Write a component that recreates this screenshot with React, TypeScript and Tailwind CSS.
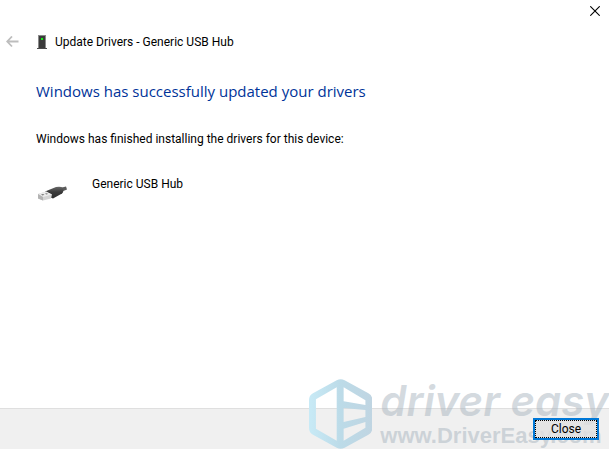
import React from 'react';

interface DriverUpdateDialogProps {
  deviceName: string;
}

const BackIcon = () => (
  <svg width="13" height="12" viewBox="0 0 13 12" fill="none" stroke="#bdbdbd" strokeWidth="1.8">
    <path d="M6 0.5 L1.2 5.5 L6 10.5 M1.2 5.5 H12.5" />
  </svg>
);

const TowerIcon = () => (
  <svg width="10" height="16" viewBox="0 0 10 16">
    <path d="M1 1 H9 V14 H1 Z" fill="#8b8b8b" />
    <path d="M2 2 H8 V14 H2 Z" fill="#3b3b3b" />
    <path d="M0 14 H10 V15 H0 Z" fill="#4a4a4a" />
    <path d="M4 4 H6 V6 H4 Z" fill="#18f018" />
  </svg>
);

const UsbPlugIcon = () => (
  <svg width="32" height="20" viewBox="0 0 32 20">
    <defs>
      <linearGradient id="plug-body" x1="0" y1="0" x2="0" y2="1">
        <stop offset="0" stopColor="#6a6a6a" />
        <stop offset="0.45" stopColor="#3a3a3a" />
        <stop offset="1" stopColor="#2c2c2c" />
      </linearGradient>
    </defs>
    <path d="M24 4 L30 2.5 L31 5.5 L25 8 Z" fill="#5c5c5c" />
    <path d="M9 7.5 L20 3 Q25 2 27 4 Q28 7.5 26 9.5 L17 14.5 L13.5 13 Z" fill="url(#plug-body)" />
    <path d="M2 10 L10 7.5 L16 10.5 L15 14.5 L7 16.5 L2 14.5 Z" fill="#d4d4d4" />
    <path d="M2 10 L10 7.5 L16 10.5 L7 13 Z" fill="#ececec" />
    <path d="M2 10 L7 13 V16.5 L2 14.5 Z" fill="#b3b3b3" />
    <path d="M5 10.5 L7 10 L8.5 10.8 L6.5 11.4 Z M9 9.6 L11 9.2 L12 10 L10.2 10.6 Z" fill="#777777" />
  </svg>
);

const CloseIcon = () => (
  <svg width="10" height="10" viewBox="0 0 10 10" stroke="#000000" strokeWidth="1.1">
    <path d="M0.3 0.3 L9.7 9.7 M9.7 0.3 L0.3 9.7" />
  </svg>
);

const HexLogo = () => (
  <svg width="64" height="70" viewBox="0 0 64 70">
    <defs>
      <linearGradient id="hex-fill" x1="0" y1="0" x2="1" y2="0">
        <stop offset="0" stopColor="#c8eaf6" />
        <stop offset="0.5" stopColor="#bcdbe8" />
        <stop offset="1" stopColor="#c0d5e2" />
      </linearGradient>
    </defs>
    <path
      fill="url(#hex-fill)"
      fillRule="evenodd"
      d="M28 1 Q32 -1 36 1 L60 14 Q64 16 64 21 V49 Q64 54 60 56 L36 69 Q32 71 28 69 L4 56 Q0 54 0 49 V21 Q0 16 4 14 Z M28 8 L7 20 V50 L28 62 Z M35 8 V22 L57 26 V21 Z M35 29 V43 L57 38 V31 Z M35 50 V62 L57 49 V43 Z"
    />
  </svg>
);

const Watermark = () => (
  <div
    aria-hidden="true"
    className="pointer-events-none absolute right-0 bottom-0 flex w-[300px] gap-2 whitespace-nowrap text-[#a9b5bf]/50"
  >
    <HexLogo />
    <div className="flex flex-col">
      <span className="font-['Inter',sans-serif] text-[42px] leading-[44px] font-semibold italic">driver easy</span>
      <span className="font-['Liberation_Sans',sans-serif] text-[22px] leading-[26px] font-bold">
        www.DriverEasy.com
      </span>
    </div>
  </div>
);

const DriverUpdateDialog: React.FC<DriverUpdateDialogProps> = ({ deviceName }) => {
  return (
    <div className="relative flex min-h-screen flex-col overflow-hidden bg-white font-['Roboto',sans-serif] text-[12px] leading-4 text-black">
      <div className="flex justify-end px-[9px] pt-[6px]">
        <button type="button" aria-label="Close window" className="flex h-[10px] w-[10px]">
          <CloseIcon />
        </button>
      </div>

      <header className="flex items-center px-[6px] pt-[18px]">
        <button type="button" aria-label="Back" disabled>
          <BackIcon />
        </button>
        <span className="ml-[18px]">
          <TowerIcon />
        </span>
        <span className="ml-2">Update Drivers - {deviceName}</span>
      </header>

      <main className="flex-1 px-9 pt-[31px]">
        <h1 className="font-['Open_Sans',sans-serif] text-[15px] leading-5 text-[#003399]">
          Windows has successfully updated your drivers
        </h1>
        <p className="mt-[30px]">Windows has finished installing the drivers for this device:</p>
        <div className="mt-[29px] flex gap-6">
          <div className="pt-2">
            <UsbPlugIcon />
          </div>
          <p>{deviceName}</p>
        </div>
      </main>

      <footer className="flex justify-end border-t border-[#dfdfdf] bg-[#f0f0f0] px-[10px] py-[9px]">
        <button
          type="button"
          className="z-10 flex h-[22px] w-[66px] border-2 border-[#0078d7] bg-[#e1e1e1]/80"
        >
          <span className="flex h-full w-full items-center justify-center border border-dotted border-black">
            Close
          </span>
        </button>
      </footer>

      <Watermark />
    </div>
  );
};

const App = () => <DriverUpdateDialog deviceName="Generic USB Hub" />;

export default App;
